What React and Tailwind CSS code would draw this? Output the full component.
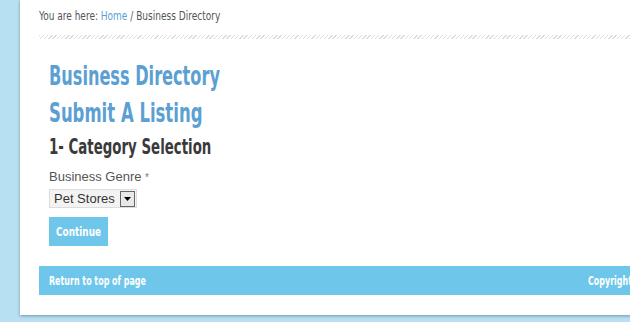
const cond = "font-['DejaVu_Sans_Condensed','DejaVu_Sans',sans-serif]";

function Narrow({ className = "", origin = "origin-left", children }) {
  return <span className={`inline-block whitespace-nowrap ${origin} ${className}`}>{children}</span>;
}

export default function App() {
  return (
    <div className="h-[322px] w-[630px] overflow-hidden bg-[#b7e1f3]">
      <div className="ml-[20px] h-[315px] w-[620px] bg-white pl-[19px] pt-[8px] shadow-[0_1px_3px_rgba(0,0,0,0.35)]">
        <div className={`${cond} text-[13px] leading-[16px] text-[#555]`}>
          <Narrow className="scale-x-[0.77]">
            You are here: <span className="text-[#5b9fd3]">Home</span> / Business Directory
          </Narrow>
        </div>
        <div className="mt-[11px] h-[4px] w-full bg-[repeating-linear-gradient(135deg,#dcdcdc_0,#dcdcdc_1px,transparent_1px,transparent_3px)]" />
        <div className="pl-[10px]">
          <h1 className={`${cond} mt-[22px] text-[26px] leading-[30px] font-bold text-[#5b9fd3]`}>
            <Narrow className="scale-x-[0.69]">Business Directory</Narrow>
          </h1>
          <h2 className={`${cond} mt-[7px] text-[26px] leading-[30px] font-bold text-[#5b9fd3]`}>
            <Narrow className="scale-x-[0.705]">Submit A Listing</Narrow>
          </h2>
          <h3 className={`${cond} mt-[6px] text-[22px] leading-[26px] font-bold text-[#3a3a3a]`}>
            <Narrow className="scale-x-[0.675]">1- Category Selection</Narrow>
          </h3>
          <div className="mt-[9px] font-['Liberation_Sans',Arial,sans-serif] text-[13px] leading-[16px] text-[#555]">
            Business Genre <span className="text-[10px] text-[#777]">*</span>
          </div>
          <div className="mt-[3px] flex h-[19px] w-[88px] items-center border border-[#ddd] bg-[#f3f3f3] pl-[4px] font-['Liberation_Sans',Arial,sans-serif] text-[13px] text-[#333]">
            <span className="flex-1 whitespace-nowrap">Pet Stores</span>
            <span className="mr-[1px] flex h-[16px] w-[15px] shrink-0 items-center justify-center border border-[#666] bg-[#e8e8e8]">
              <svg width="7" height="4" viewBox="0 0 7 4"><path d="M0 0h7L3.5 4z" fill="#000" /></svg>
            </span>
          </div>
          <button className={`${cond} mt-[9px] flex h-[29px] w-[59px] items-center justify-center bg-[#6ec6ea] text-[13px] font-bold text-white`}>
            <Narrow origin="origin-center" className="scale-x-[0.76]">Continue</Narrow>
          </button>
        </div>
        <div className={`${cond} mt-[20px] flex h-[29px] items-center overflow-hidden bg-[#6ec6ea] pl-[10px] text-[13px] font-bold text-white`}>
          <span className="w-[539px] shrink-0">
            <Narrow className="scale-x-[0.68]">Return to top of page</Narrow>
          </span>
          <Narrow className="scale-x-[0.68]">Copyright</Narrow>
        </div>
      </div>
    </div>
  );
}
